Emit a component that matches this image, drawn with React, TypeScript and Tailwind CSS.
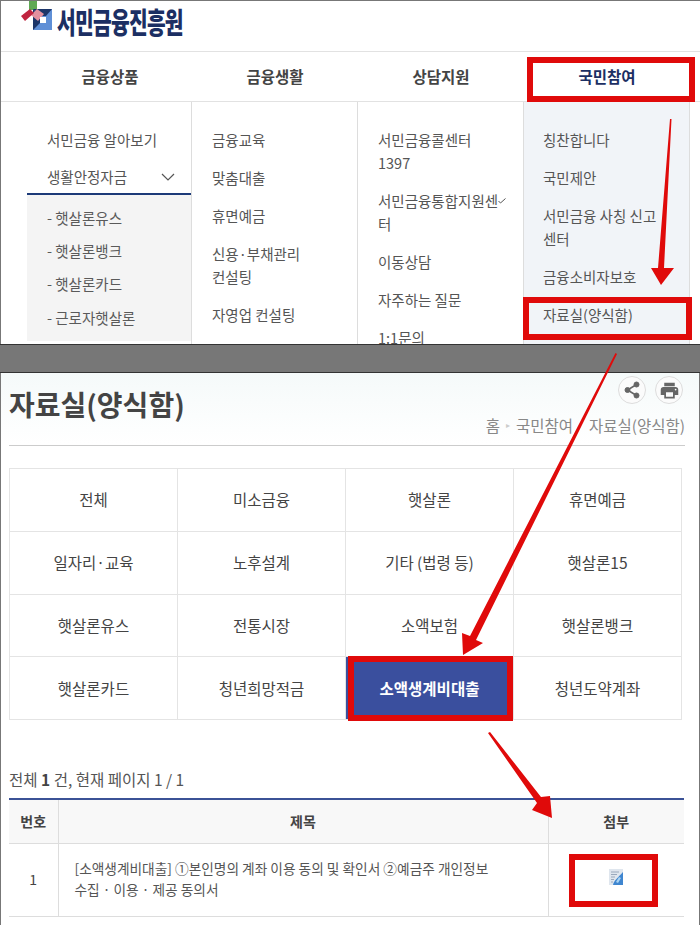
import React from 'react';
import { MdPrint } from 'react-icons/md';

const tabs = ['금융상품', '금융생활', '상담지원', '국민참여'];
const col2 = ['금융교육', '맞춤대출', '휴면예금', '신용·부채관리\n컨설팅', '자영업 컨설팅'];
const col3 = ['서민금융콜센터\n1397', '서민금융통합지원센\n터', '이동상담', '자주하는 질문', '1:1문의'];
const col4 = ['칭찬합니다', '국민제안', '서민금융 사칭 신고\n센터', '금융소비자보호', '자료실(양식함)'];
const subs = ['- 햇살론유스', '- 햇살론뱅크', '- 햇살론카드', '- 근로자햇살론'];
const cats = [
  '전체', '미소금융', '햇살론', '휴면예금',
  '일자리·교육', '노후설계', '기타 (법령 등)', '햇살론15',
  '햇살론유스', '전통시장', '소액보험', '햇살론뱅크',
  '햇살론카드', '청년희망적금', '소액생계비대출', '청년도약계좌',
];

function MenuList({ items }: { items: string[] }) {
  return (
    <ul className="flex flex-col gap-[15px]">
      {items.map((t) => (
        <li key={t} className="whitespace-pre-line">{t}</li>
      ))}
    </ul>
  );
}

function Logo() {
  return (
    <svg width="34" height="30" viewBox="0 0 34 30" className="shrink-0">
      <rect x="9" y="0" width="8" height="9" fill="#5fa854" />
      <rect x="13" y="8" width="19" height="21" fill="#5f8fd6" />
      <path d="M13 8H32L26 15H20z" fill="#1c3569" />
      <path d="M13 8V29L21 21L18 13z" fill="#1c3569" />
      <path d="M17 8L24 13L18 20L11 14z" fill="#e2909f" />
      <rect x="20" y="16" width="6" height="6" fill="#ffffff" />
      <path d="M1 15L10 8L14 12L5 20z" fill="#c0243f" />
    </svg>
  );
}

// annotation arrows drawn over both screenshots
function Arrows() {
  return (
    <svg width="700" height="925" className="absolute left-0 top-0 pointer-events-none">
      <g fill="#e00a0a">
        <path d="M670 119L671.5 119L664 268L674 268L661 285L651 268L658 268z" />
        <path d="M615.5 353L617 354L476 640L483 643L463 655L462 633L470 636z" />
        <path d="M488 733L490 732L541 797L550 796L552 818L532 810L537 803z" />
      </g>
    </svg>
  );
}

export default function App() {
  return (
    <div className="relative w-[700px] h-[925px] overflow-hidden bg-white text-[14.5px] text-[#555] font-['Noto_Sans_CJK_KR','Noto_Sans',sans-serif]">
      <div className="h-[344px] overflow-hidden border-l border-t border-[#777]">
        <div className="flex h-[50px] items-start gap-[3px] pl-[19px]">
          <Logo />
          <span className="mt-[-2px] origin-left scale-x-[0.7] text-[29px] font-black leading-[44px] tracking-[-1px] text-[#1c2f63] whitespace-nowrap">서민금융진흥원</span>
        </div>

        <div className="flex h-[51px] border-y border-[#e2e2e2] pr-[10px] text-[15.5px] font-bold text-[#444]">
          {tabs.map((t, i) => (
            <div
              key={t}
              className={i === 0 ? 'flex w-[191px] items-center justify-center pl-[27px]' : i === 3 ? 'flex w-[166px] items-center justify-center text-[#1c2f63]' : 'flex w-[166px] items-center justify-center'}
            >
              {t}
            </div>
          ))}
        </div>

        <div className="flex h-[243px] leading-[23px] pr-[10px]">
          <div className="w-[191px] shrink-0 border-r border-[#ddd] pl-[26px] pt-[26px]">
            <div className="pl-[20px]">서민금융 알아보기</div>
            <div className="mt-[14px] flex h-[30px] items-start justify-between border-b-2 border-[#1c3a78] pl-[20px] pr-[16px]">
              생활안정자금
              <svg width="14" height="8" viewBox="0 0 14 8" className="mt-[8px]" fill="none" stroke="#555" strokeWidth="1.2">
                <path d="M1 1l6 6 6-6" />
              </svg>
            </div>
            <ul className="flex h-[146px] flex-col gap-[10.2px] bg-[#f4f4f4] pl-[20px] pt-[11px] text-[#5a5a5a]">
              {subs.map((t) => (
                <li key={t}>{t}</li>
              ))}
            </ul>
          </div>
          <div className="w-[166px] shrink-0 border-r border-[#ddd] pl-[20px] pt-[26px]">
            <MenuList items={col2} />
          </div>
          <div className="relative w-[166px] shrink-0 border-r border-[#ddd] pl-[20px] pt-[26px]">
            <MenuList items={col3} />
            <svg width="8" height="6" viewBox="0 0 8 6" className="absolute left-[140px] top-[96px]" fill="none" stroke="#555" strokeWidth="1">
              <path d="M0.5 3l2 2 5-4.5" />
            </svg>
          </div>
          <div className="w-[166px] shrink-0 border-r border-[#ddd] bg-[#f1f4f8] pl-[19px] pt-[26px]">
            <MenuList items={col4} />
          </div>
        </div>
      </div>

      <div className="h-[29px] border-y border-[#333] bg-[#777]" />

      <div className="h-[552px] border-x border-[#777] bg-white px-[8px]">
        <div className="mx-[-8px] h-[71px] bg-gradient-to-b from-[#f5fafa] to-white px-[8px]">
          <div className="flex justify-end gap-[9px] pt-[3px]">
            <span className="flex size-[28px] items-center justify-center rounded-full border border-[#ddd] bg-[#fbfbfb] text-[#666]">
              <svg width="18" height="18" viewBox="0 0 18 18" fill="#666" stroke="#666">
                <path d="M13.5 3.5L4.5 9l9 5.5" fill="none" strokeWidth="1.6" />
                <circle cx="13.5" cy="3.5" r="2.5" />
                <circle cx="4.5" cy="9" r="2.5" />
                <circle cx="13.5" cy="14.5" r="2.5" />
              </svg>
            </span>
            <span className="mr-[8px] flex size-[28px] items-center justify-center rounded-full border border-[#ddd] bg-[#fbfbfb] text-[#666]">
              <MdPrint size={21} />
            </span>
          </div>
        </div>
        <div className="mt-[-44px] flex h-[46px] w-[676px] items-start justify-between border-b border-[#ccc]">
          <h1 className="mt-[-16px] text-[28px] font-bold leading-[40px] text-[#444]">자료실(양식함)</h1>
          <div className="mt-[15px] flex items-center text-[15.5px] leading-[20px] text-[#888]">
            <span>홈</span>
            <span className="mx-[6px] text-[8px] text-[#ccc]">▸</span>
            <span>국민참여</span>
            <span className="w-[16px]" />
            <span>자료실(양식함)</span>
          </div>
        </div>

        <div className="mt-[22px] w-[673px] grid grid-cols-4 border-l border-t border-[#e4e4e4] text-[15.5px]">
          {cats.map((c) => (
            <div
              key={c}
              className={c === '소액생계비대출' ? 'flex h-[62.75px] items-center justify-center border-b border-r border-[#e4e4e4] bg-[#3a4f9e] font-bold text-white' : 'flex h-[62.75px] items-center justify-center border-b border-r border-[#e4e4e4] text-[#444]'}
            >
              {c}
            </div>
          ))}
        </div>

        <p className="mt-[48px] text-[15.5px] leading-[22px] text-[#555]">
          전체 <b className="text-[#444]">1</b> 건, 현재 페이지 1 / 1
        </p>

        <table className="mt-[8px] w-[675px] table-fixed border-t-2 border-[#3b5296] text-[14px] text-[#444]">
          <thead>
            <tr className="h-[44px] border-b border-[#ddd] bg-[#f8f8f8] font-bold">
              <th className="w-[49px] border-r border-[#ddd] font-bold">번호</th>
              <th className="w-[490px] border-r border-[#ddd] font-bold">제목</th>
              <th className="font-bold">첨부</th>
            </tr>
          </thead>
          <tbody>
            <tr className="h-[73px] border-b border-[#ddd]">
              <td className="border-r border-[#ddd] text-center">1</td>
              <td className="border-r border-[#ddd] pl-[16px] pb-[2px] text-[13.7px] leading-[21px] text-[#555]">
                [소액생계비대출] ①본인명의 계좌 이용 동의 및 확인서 ②예금주 개인정보
                <br />
                수집 · 이용 · 제공 동의서
              </td>
              <td>
                <div className="flex justify-center pb-[6px]">
                  <svg width="14" height="16" viewBox="0 0 14 16">
                    <rect width="14" height="16" fill="#dfe6ee" />
                    <path d="M2 3h8M2 5.5h6M2 8h4M2 10.5h3M2 13h2" stroke="#9aa9bc" strokeWidth="1" />
                    <path d="M14 3v13H4c1-5 5-7 10-13z" fill="#3f86d0" />
                    <path d="M10 8l2 1-3 5-2-1z" fill="#a9d3f2" />
                  </svg>
                </div>
              </td>
            </tr>
          </tbody>
        </table>
      </div>

      <div className="absolute left-[527px] top-[57px] h-[45px] w-[168px] border-[6px] border-[#e00a0a]" />
      <div className="absolute left-[523px] top-[297px] h-[43px] w-[169px] border-[6px] border-[#e00a0a]" />
      <div className="absolute left-[348px] top-[656px] h-[65px] w-[165px] border-[6px] border-[#e00a0a]" />
      <div className="absolute left-[569px] top-[854px] h-[53px] w-[89px] border-[6px] border-[#e00a0a]" />
      <Arrows />
    </div>
  );
}
